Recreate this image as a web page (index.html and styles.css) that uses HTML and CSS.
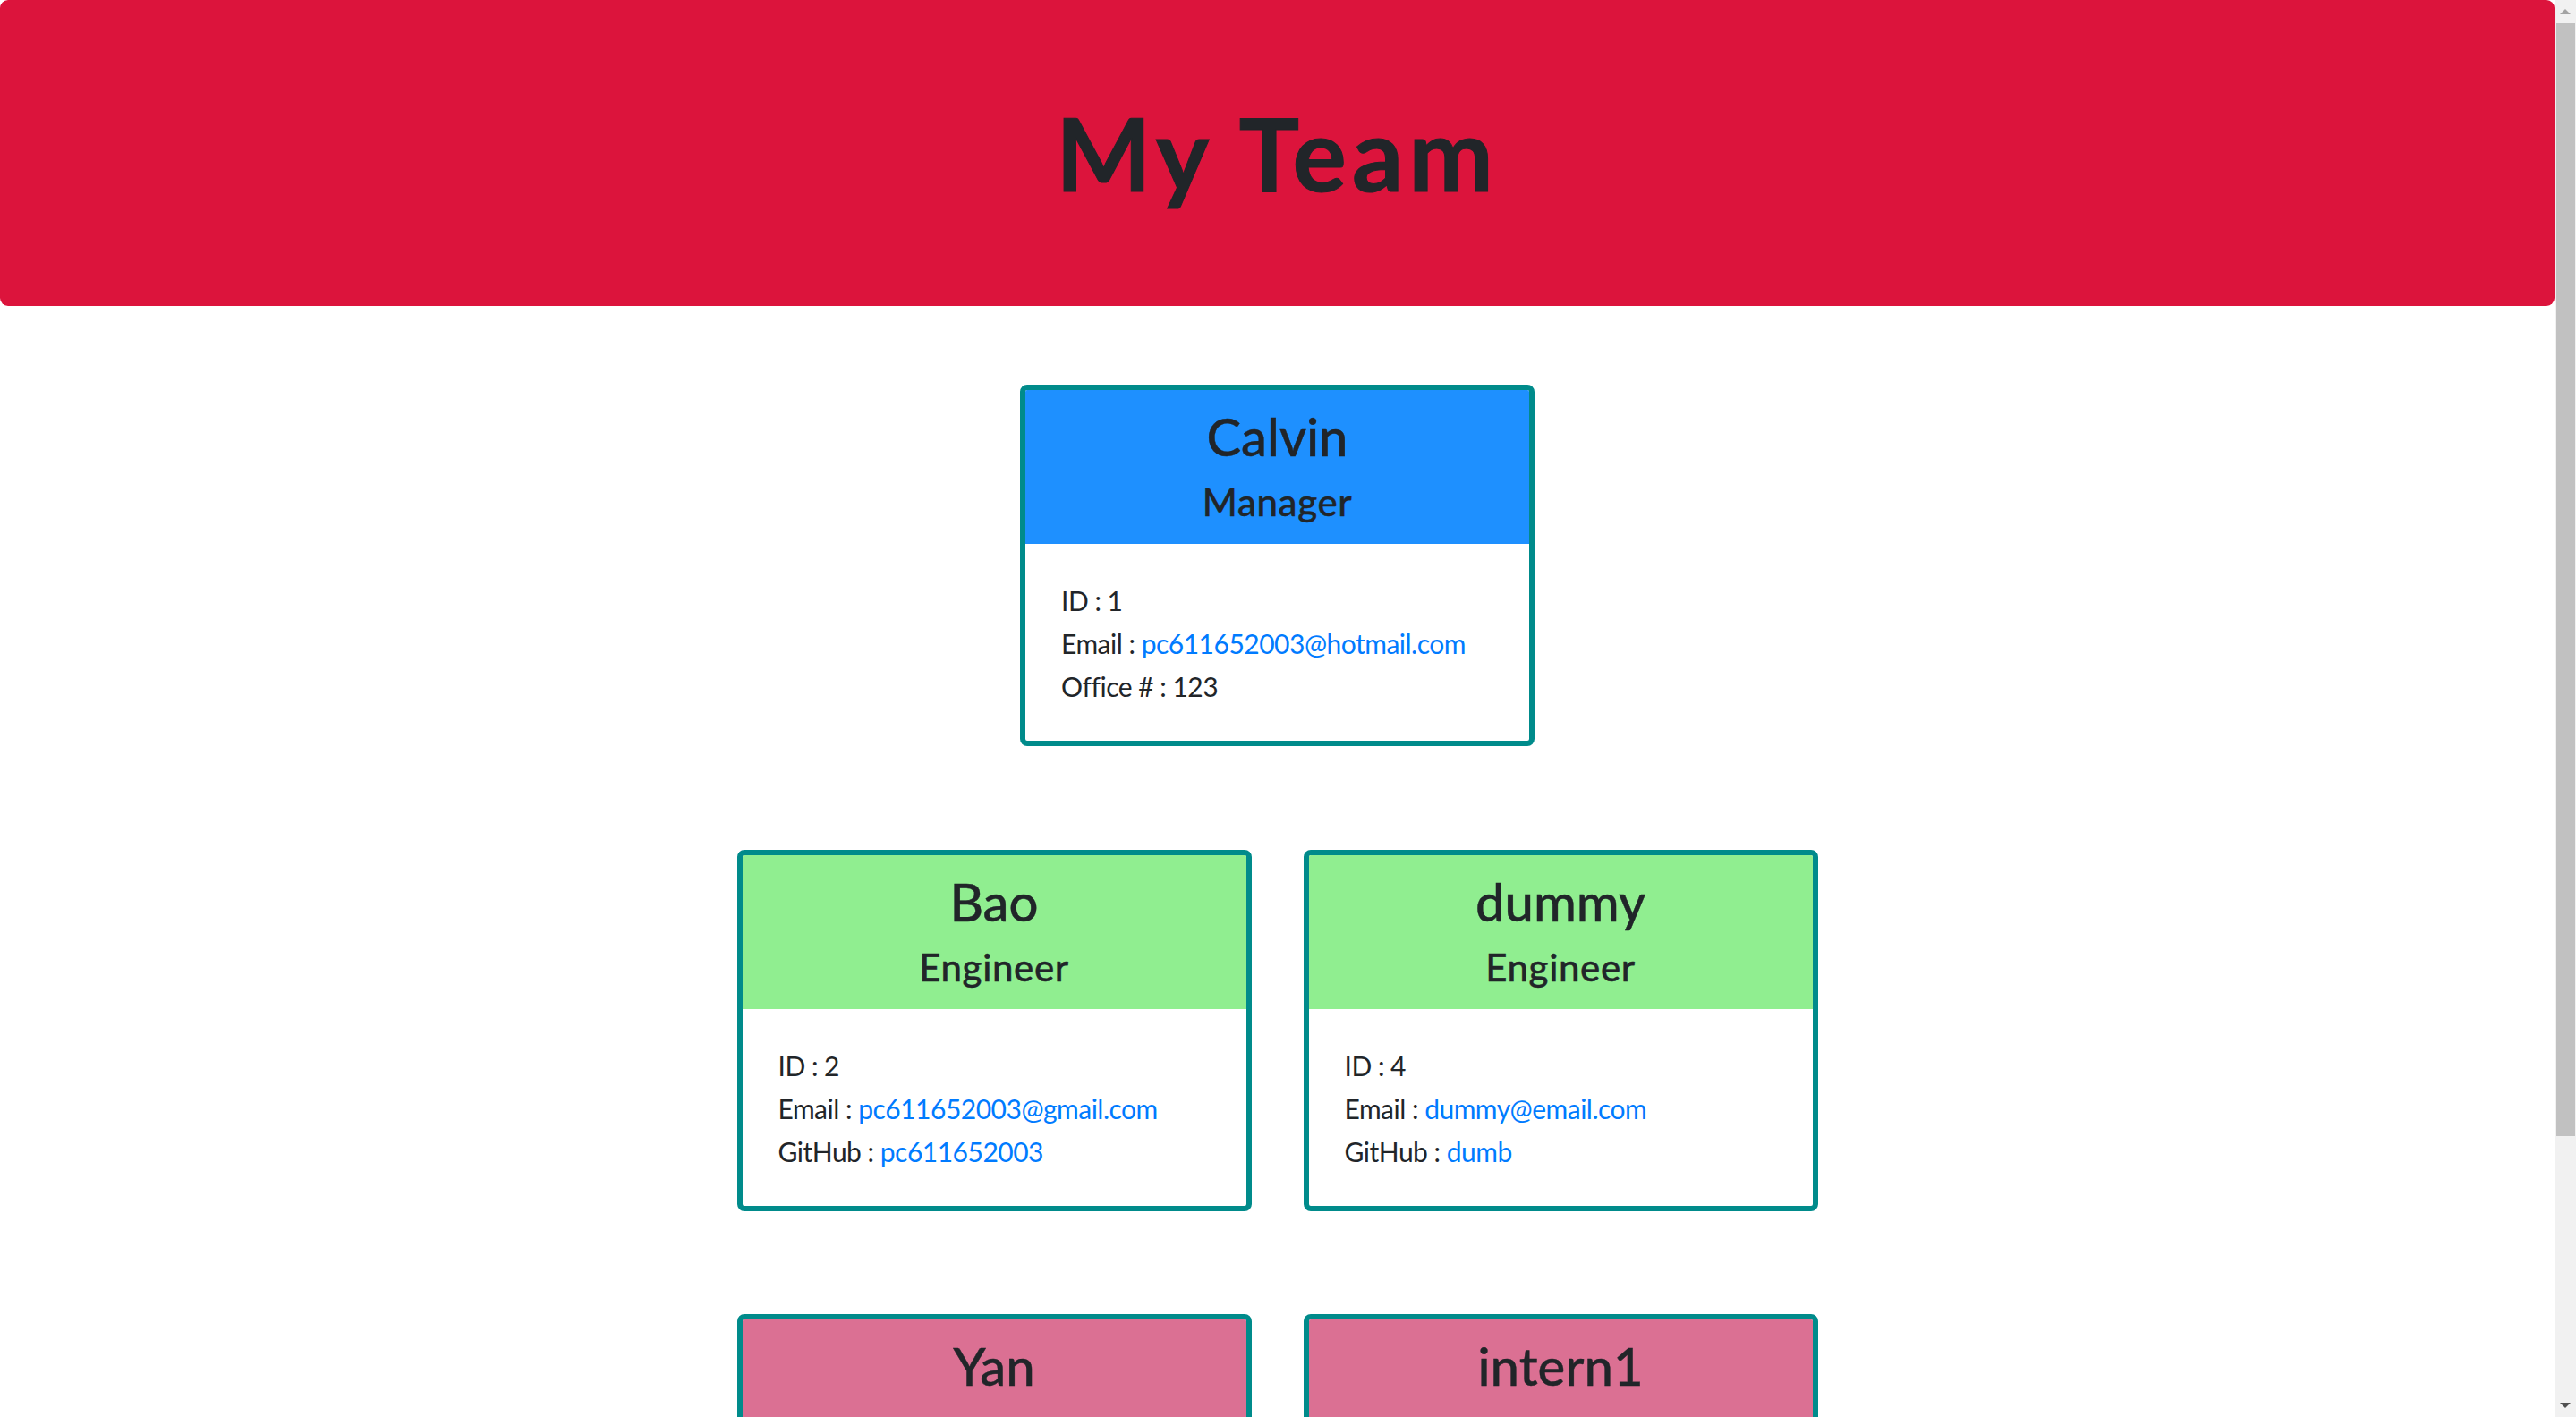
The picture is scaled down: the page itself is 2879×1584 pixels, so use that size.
FILE: index.html
```html
<!DOCTYPE html>
<html lang="en">
<head>
<meta charset="utf-8">
<title>My Team</title>
<link rel="stylesheet" href="styles.css">
</head>
<body>
<div class="page">
  <header class="hero">
    <h1 class="hero-title">My Team</h1>
  </header>
  <main class="team">
    <div class="team-row">
      <div class="card card-manager">
        <div class="card-header">
          <h2 class="card-name">Calvin</h2>
          <h3 class="card-role">Manager</h3>
        </div>
        <div class="card-body">
          <p class="card-line">ID : 1</p>
          <p class="card-line">Email : <a href="mailto:pc611652003@hotmail.com">pc611652003@hotmail.com</a></p>
          <p class="card-line">Office # : 123</p>
        </div>
      </div>
    </div>
    <div class="team-row">
      <div class="card card-engineer">
        <div class="card-header">
          <h2 class="card-name">Bao</h2>
          <h3 class="card-role">Engineer</h3>
        </div>
        <div class="card-body">
          <p class="card-line">ID : 2</p>
          <p class="card-line">Email : <a href="mailto:pc611652003@gmail.com">pc611652003@gmail.com</a></p>
          <p class="card-line">GitHub : <a href="#">pc611652003</a></p>
        </div>
      </div>
      <div class="card card-engineer">
        <div class="card-header">
          <h2 class="card-name">dummy</h2>
          <h3 class="card-role">Engineer</h3>
        </div>
        <div class="card-body">
          <p class="card-line">ID : 4</p>
          <p class="card-line">Email : <a href="mailto:dummy@email.com">dummy@email.com</a></p>
          <p class="card-line">GitHub : <a href="#">dumb</a></p>
        </div>
      </div>
    </div>
    <div class="team-row">
      <div class="card card-intern">
        <div class="card-header">
          <h2 class="card-name">Yan</h2>
          <h3 class="card-role">Intern</h3>
        </div>
        <div class="card-body">
          <p class="card-line">ID : 3</p>
          <p class="card-line">Email : <a href="mailto:yan@email.com">yan@email.com</a></p>
          <p class="card-line">School : UCI</p>
        </div>
      </div>
      <div class="card card-intern">
        <div class="card-header">
          <h2 class="card-name">intern1</h2>
          <h3 class="card-role">Intern</h3>
        </div>
        <div class="card-body">
          <p class="card-line">ID : 5</p>
          <p class="card-line">Email : <a href="mailto:intern1@email.com">intern1@email.com</a></p>
          <p class="card-line">School : school</p>
        </div>
      </div>
    </div>
  </main>
</div>
<div class="scrollbar" aria-hidden="true">
  <div class="sb-btn"><span class="sb-arrow-up"></span></div>
  <div class="sb-thumb"></div>
  <div class="sb-space"></div>
  <div class="sb-btn"><span class="sb-arrow-down"></span></div>
</div>
</body>
</html>
```
FILE: styles.css
```css
html {
  overflow: hidden;
  height: 100%;
}

body {
  margin: 0;
  font-family: "Lato", "Open Sans", sans-serif;
  color: #212529;
  background: #ffffff;
}

.page {
  width: 2855px;
}

.hero {
  height: 342px;
  background: #dc143c;
  border-radius: 9px;
  display: flex;
  align-items: center;
  justify-content: center;
}

.hero-title {
  margin: 0;
  font-size: 113px;
  font-weight: 700;
  line-height: 1.2;
  letter-spacing: 6px;
  -webkit-text-stroke: 1px #212529;
}

.team {
  display: flex;
  flex-direction: column;
  gap: 115.5px;
  padding-top: 88px;
}

.team-row {
  display: flex;
  justify-content: center;
  gap: 58px;
}

.card {
  width: 575px;
  box-sizing: border-box;
  border: 6px solid #008b8b;
  border-radius: 8px;
  overflow: hidden;
  background: #ffffff;
}

.card-header {
  padding: 17px 20px 23px;
  text-align: center;
}

.card-manager .card-header {
  background: #1e90ff;
}

.card-engineer .card-header {
  background: #90ee90;
}

.card-intern .card-header {
  background: #db7093;
}

.card-name {
  margin: 0 0 14px;
  font-size: 58px;
  font-weight: 500;
  line-height: 70px;
  -webkit-text-stroke: 0.4px #212529;
}

.card-role {
  margin: 0;
  font-size: 42px;
  font-weight: 500;
  line-height: 48px;
  letter-spacing: 0.6px;
  -webkit-text-stroke: 0.4px #212529;
}

.card-body {
  padding: 39px 40px 37px;
  font-size: 30px;
  line-height: 48px;
  letter-spacing: -0.5px;
  white-space: nowrap;
}

.card-line {
  margin: 0;
}

.card-line a {
  color: #007bff;
  text-decoration: none;
}

.scrollbar {
  position: fixed;
  top: 0;
  right: 0;
  width: 24px;
  height: 100%;
  background: #f1f1f1;
  display: flex;
  flex-direction: column;
}

.sb-btn {
  height: 26px;
  display: flex;
  align-items: center;
  justify-content: center;
}

.sb-arrow-up {
  width: 0;
  height: 0;
  border-left: 6px solid transparent;
  border-right: 6px solid transparent;
  border-bottom: 6px solid #a3a3a3;
}

.sb-arrow-down {
  width: 0;
  height: 0;
  border-left: 6px solid transparent;
  border-right: 6px solid transparent;
  border-top: 6px solid #505050;
}

.sb-thumb {
  margin-left: 2px;
  width: 21px;
  height: 1244px;
  background: #c1c1c1;
}

.sb-space {
  flex: 1;
}
```
